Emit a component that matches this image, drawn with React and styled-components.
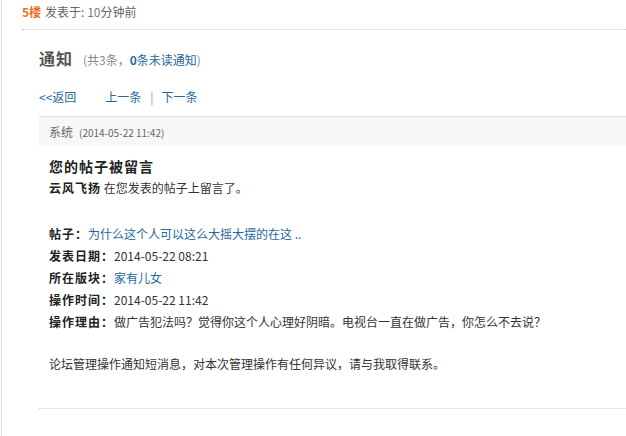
import React from "react";
import styled, { createGlobalStyle } from "styled-components";

const Global = createGlobalStyle`
  html, body { margin: 0; padding: 0; background: #fff; }
  body {
    font-family: "SimSun", "Noto Sans CJK SC", "Liberation Sans", sans-serif;
    font-size: 12px;
    color: #333;
  }
`;

const Page = styled.div`
  margin-left: 1px;
  border-left: 1px solid #d3e2ef;
  min-height: 436px;
  box-sizing: border-box;
`;

const PostHead = styled.div`
  margin-left: 20px;
  height: 24px;
  line-height: 24px;
  padding-bottom: 5px;
  border-bottom: 1px dotted #c8c8c8;
  color: #666;
`;

const Floor = styled.span`
  color: #f26c1f;
  font-weight: bold;
  margin-right: 4px;
`;

const Num = styled.span`
  color: #7a7a9a;
`;

const Notice = styled.div`
  padding-left: 37px;
  padding-top: 16px;
`;

const Title = styled.div`
  line-height: 24px;
  height: 24px;
  display: flex;
  align-items: baseline;
  gap: 10px;
`;

const TitleText = styled.span`
  font-size: 16px;
  font-weight: bold;
  letter-spacing: 1px;
  color: #555;
`;

const Count = styled.span`
  color: #888;
`;

const Blue = styled.span`
  color: #28679c;
  font-weight: ${(p) => (p.$bold ? "bold" : "normal")};
`;

const Nav = styled.div`
  margin-top: 17px;
  line-height: 20px;
  height: 20px;
  display: flex;
  align-items: center;
`;

const NavLink = styled.a`
  color: #28679c;
  text-decoration: none;
  margin-right: ${(p) => p.$mr || 0}px;
`;

const Sep = styled.span`
  color: #999;
  margin: 0 8px 0 9px;
`;

const Box = styled.div`
  margin-top: 9px;
  border-bottom: 1px dotted #cfcfcf;
`;

const BoxHead = styled.div`
  border-top: 1px solid #e1e1e1;
  background: #f7f7f7;
  height: 29px;
  line-height: 29px;
  padding-left: 10px;
  color: #666;
`;

const Time = styled.span`
  font-size: 10px;
  margin-left: 6px;
  color: #666;
`;

const Body = styled.div`
  padding: 9px 0 33px 10px;
  color: #333;
`;

const Subject = styled.div`
  font-size: 14px;
  font-weight: bold;
  letter-spacing: 1px;
  line-height: 22px;
  color: #222;
`;

const Line = styled.div`
  line-height: 22px;
  margin-top: ${(p) => p.$mt || 0}px;
`;

const B = styled.b`
  color: #222;
  letter-spacing: 1px;
`;

const Rows = styled.div`
  margin-top: 24px;
`;

const rows = [
  { k: "帖子：", v: "为什么这个人可以这么大摇大摆的在这 ..", link: true },
  { k: "发表日期：", v: "2014-05-22 08:21" },
  { k: "所在版块：", v: "家有儿女", link: true },
  { k: "操作时间：", v: "2014-05-22 11:42" },
  { k: "操作理由：", v: "做广告犯法吗？觉得你这个人心理好阴暗。电视台一直在做广告，你怎么不去说？" },
];

export default function App() {
  return (
    <>
      <Global />
      <Page>
        <PostHead>
          <Floor>5楼</Floor>发表于: <Num>10</Num>分钟前
        </PostHead>
        <Notice>
          <Title>
            <TitleText>通知</TitleText>
            <Count>
              (共3条，<Blue $bold>0</Blue>
              <Blue>条未读通知</Blue>)
            </Count>
          </Title>
          <Nav>
            <NavLink href="#" $mr={29}>&lt;&lt;返回</NavLink>
            <NavLink href="#">上一条</NavLink>
            <Sep>|</Sep>
            <NavLink href="#">下一条</NavLink>
          </Nav>
          <Box>
            <BoxHead>
              系统<Time>(2014-05-22 11:42)</Time>
            </BoxHead>
            <Body>
              <Subject>您的帖子被留言</Subject>
              <Line>
                <B>云风飞扬</B> 在您发表的帖子上留言了。
              </Line>
              <Rows>
                {rows.map((r) => (
                  <Line key={r.k}>
                    <B>{r.k}</B>
                    {r.link ? <Blue>{r.v}</Blue> : r.v}
                  </Line>
                ))}
              </Rows>
              <Line $mt={20}>论坛管理操作通知短消息，对本次管理操作有任何异议，请与我取得联系。</Line>
            </Body>
          </Box>
        </Notice>
      </Page>
    </>
  );
}
